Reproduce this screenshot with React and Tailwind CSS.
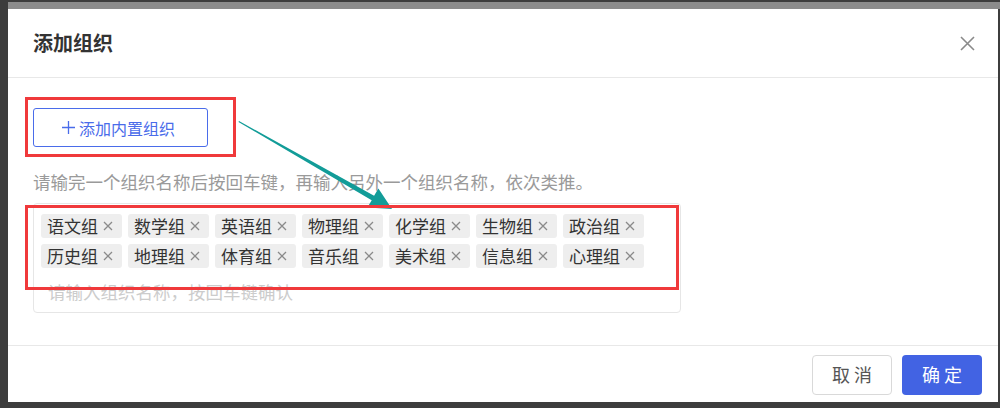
import React from "react";

const tags = [
  ["语文组", "数学组", "英语组", "物理组", "化学组", "生物组", "政治组"],
  ["历史组", "地理组", "体育组", "音乐组", "美术组", "信息组", "心理组"],
];

function Tag({ label }) {
  return (
    <div className="flex h-6 items-center rounded-[3px] bg-[#eeeeee] pl-[6px] pr-[9px] text-[17px] leading-6 text-[#333]">
      <span>{label}</span>
      <svg className="ml-[5px]" width="10" height="10" viewBox="0 0 10 10">
        <path d="M1 1 L9 9 M9 1 L1 9" stroke="#8a8a8a" strokeWidth="1.3" fill="none" />
      </svg>
    </div>
  );
}

export default function App() {
  return (
    <div
      className="relative flex h-[408px] w-[1000px] overflow-hidden bg-[#3d3d3d]"
      style={{ fontFamily: '"Noto Sans CJK SC", "Noto Sans", sans-serif' }}
    >
      <div className="w-[8px] shrink-0" />
      <div className="flex flex-1 flex-col">
        <div className="h-[2px] shrink-0" />
        <div className="h-[7px] shrink-0 bg-[#8c8c8c]" />
        <div className="flex h-[393px] w-[990px] flex-col bg-white">
          {/* header */}
          <div className="flex h-[69px] shrink-0 items-center justify-between border-b border-[#e8e8e8] pl-[25px] pr-[23px]">
            <span className="text-[20px] font-bold text-[#333]">添加组织</span>
            <svg width="15" height="15" viewBox="0 0 15 15">
              <path d="M1 1 L14 14 M14 1 L1 14" stroke="#8a8a8a" strokeWidth="1.6" fill="none" />
            </svg>
          </div>
          {/* body */}
          <div className="flex flex-1 flex-col pl-[25px] pt-[30px]">
            <button className="flex h-[39px] w-[175px] items-center justify-center gap-[4px] rounded-[3px] border border-[#4a6cea] pr-[4px] text-[16px] text-[#4a6cea]">
              <svg width="13" height="13" viewBox="0 0 13 13">
                <path d="M0 6.5 H13 M6.5 0 V13" stroke="#4a6cea" strokeWidth="1.3" fill="none" />
              </svg>
              <span>添加内置组织</span>
            </button>
            <div className="mt-[23px] text-[17.5px] leading-6 text-[#9a9a9a]">
              请输完一个组织名称后按回车键，再输入另外一个组织名称，依次类推。
            </div>
            <div className="mt-[9px] flex h-[110px] w-[648px] flex-col rounded-[4px] border border-[#e6e6e6] pl-[7px] pt-[10px]">
              <div className="flex flex-col gap-[6px]">
                {tags.map((row, i) => (
                  <div key={i} className="flex gap-[6px]">
                    {row.map((t) => (
                      <Tag key={t} label={t} />
                    ))}
                  </div>
                ))}
              </div>
              <div className="mt-[12px] pl-[7px] text-[17.5px] leading-6 text-[#cccccc]">
                请输入组织名称，按回车键确认
              </div>
            </div>
          </div>
          {/* footer */}
          <div className="flex h-[57px] shrink-0 items-center justify-end gap-[10px] border-t border-[#e8e8e8] pr-[16px] pt-[1px]">
            <button className="flex h-[40px] w-[80px] items-center justify-center rounded-[4px] border border-[#d9d9d9] bg-white pl-[4px] text-[18px] tracking-[4px] text-[#555]">
              取消
            </button>
            <button className="flex h-[40px] w-[80px] items-center justify-center rounded-[4px] bg-[#4263e3] pl-[4px] text-[18px] tracking-[4px] text-white">
              确定
            </button>
          </div>
        </div>
      </div>

      {/* annotations */}
      <svg className="pointer-events-none absolute left-0 top-0" width="1000" height="408" viewBox="0 0 1000 408">
        <polygon
          points="239,121 374.1,195.8 378.4,188.5 392,209 367.4,207.5 371.7,200.2 238.5,122"
          fill="#129c98"
        />
        <rect x="26.5" y="98.5" width="208" height="57" fill="none" stroke="#f0393b" strokeWidth="3" />
        <rect x="26.5" y="206.5" width="651" height="82" fill="none" stroke="#f0393b" strokeWidth="3" />
      </svg>
    </div>
  );
}
